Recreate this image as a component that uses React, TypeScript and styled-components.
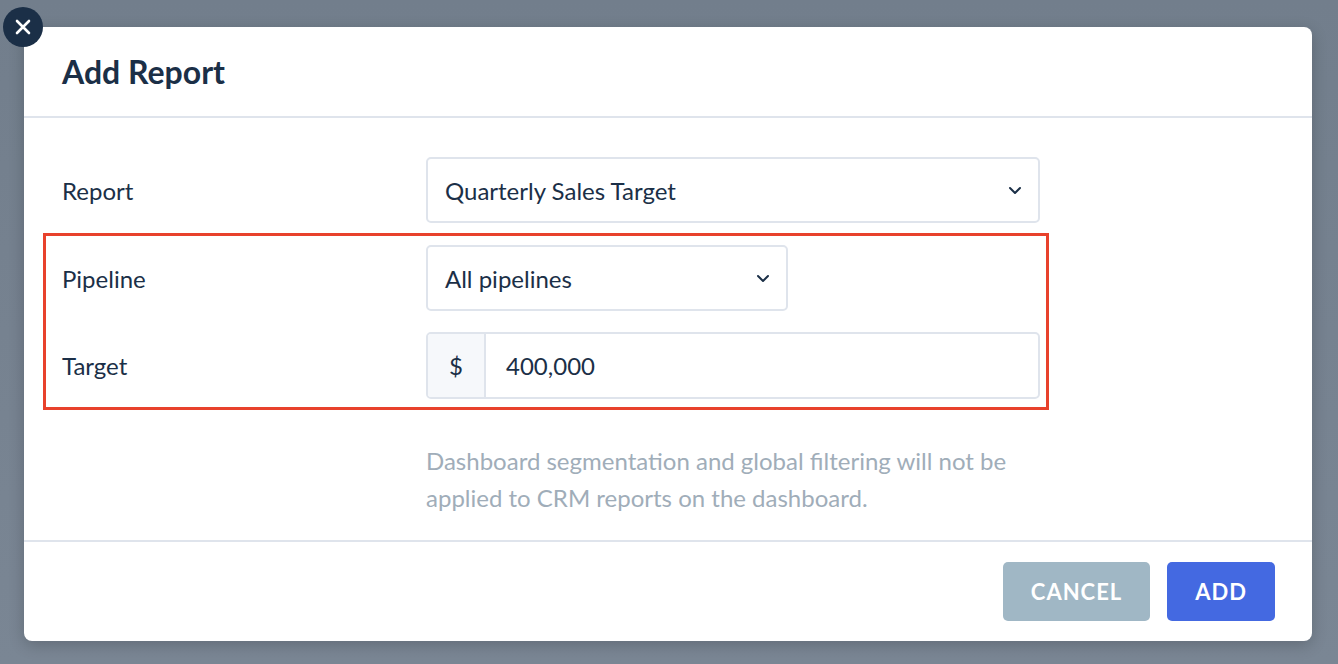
import styled, { createGlobalStyle } from 'styled-components';

const Global = createGlobalStyle`
  html, body { margin: 0; height: 100%; }
  body {
    background: #76828f;
    font-family: Lato, "Open Sans", sans-serif;
    color: #1b2f47;
  }
`;

const Backdrop = styled.div`
  position: relative;
  width: 1338px;
  height: 664px;
  padding: 27px 26px 23px 24px;
  box-sizing: border-box;
  background: linear-gradient(#727e8c, #7a8694);
`;

const CloseButton = styled.button`
  position: absolute;
  left: 3px;
  top: 7px;
  width: 40px;
  height: 40px;
  border-radius: 50%;
  border: none;
  background: #1b2f47;
  display: flex;
  align-items: center;
  justify-content: center;
  padding: 0;
  z-index: 2;
`;

const Modal = styled.div`
  background: #fff;
  border-radius: 8px;
  height: 100%;
  display: flex;
  flex-direction: column;
  box-shadow: 0 4px 16px rgba(0, 0, 0, 0.2);
`;

const Header = styled.div`
  height: 89px;
  border-bottom: 2px solid #dfe4ec;
  display: flex;
  align-items: center;
  padding-left: 38px;
`;

const Title = styled.h1`
  margin: 0;
  font-size: 32px;
  font-weight: 700;
  color: #1b2f47;
`;

const Body = styled.div`
  flex: 1;
  padding: 39px 38px 0;
  border-bottom: 2px solid #dfe4ec;
`;

const Row = styled.div<{ $gap?: number }>`
  display: grid;
  grid-template-columns: 364px 614px;
  align-items: center;
  margin-bottom: ${p => p.$gap ?? 0}px;
`;

const Label = styled.div`
  font-size: 24px;
`;

const Highlight = styled.div`
  width: 1006px;
  box-sizing: border-box;
  margin: 10px 0 0 -19px;
  padding: 9px 0 8px 16px;
  border: 3px solid #e8412c;
`;

const Select = styled.div<{ $width: number }>`
  width: ${p => p.$width}px;
  height: 66px;
  box-sizing: border-box;
  border: 2px solid #dfe4ec;
  border-radius: 5px;
  display: flex;
  align-items: center;
  justify-content: space-between;
  padding: 0 16px 0 17px;
  font-size: 24px;
`;

const InputGroup = styled.div`
  height: 67px;
  box-sizing: border-box;
  border: 2px solid #dfe4ec;
  border-radius: 5px;
  display: flex;
  font-size: 24px;
  overflow: hidden;
`;

const Prefix = styled.div`
  width: 56px;
  background: #f6f8fb;
  border-right: 2px solid #dfe4ec;
  display: flex;
  align-items: center;
  justify-content: center;
`;

const Value = styled.div`
  display: flex;
  align-items: center;
  padding-left: 20px;
`;

const Help = styled.p`
  margin: 32px 0 0 364px;
  font-size: 24px;
  line-height: 37px;
  color: #a0adb9;
  width: 660px;
`;

const Footer = styled.div`
  height: 99px;
  display: flex;
  align-items: center;
  justify-content: flex-end;
  gap: 17px;
  padding-right: 37px;
`;

const Button = styled.button<{ $primary?: boolean }>`
  height: 59px;
  padding: 0 28px;
  border: none;
  border-radius: 5px;
  background: ${p => (p.$primary ? '#4469e1' : '#a0b7c5')};
  color: #fff;
  font-family: inherit;
  font-size: 22px;
  font-weight: 700;
  letter-spacing: 1px;
`;

const Chevron = () => (
  <svg width="14" height="9" viewBox="0 0 14 9" fill="none">
    <path d="M2 2l5 5 5-5" stroke="#1b2f47" strokeWidth="2" strokeLinecap="round" strokeLinejoin="round" />
  </svg>
);

export default function App() {
  return (
    <Backdrop>
      <Global />
      <CloseButton>
        <svg width="16" height="16" viewBox="0 0 16 16">
          <path d="M2 2l12 12M14 2L2 14" stroke="#fff" strokeWidth="2.6" strokeLinecap="round" />
        </svg>
      </CloseButton>
      <Modal>
        <Header>
          <Title>Add Report</Title>
        </Header>
        <Body>
          <Row>
            <Label>Report</Label>
            <Select $width={614}>
              Quarterly Sales Target <Chevron />
            </Select>
          </Row>
          <Highlight>
            <Row $gap={21}>
              <Label>Pipeline</Label>
              <Select $width={362}>
                All pipelines <Chevron />
              </Select>
            </Row>
            <Row>
              <Label>Target</Label>
              <InputGroup>
                <Prefix>$</Prefix>
                <Value>400,000</Value>
              </InputGroup>
            </Row>
          </Highlight>
          <Help>
            Dashboard segmentation and global filtering will not be applied to CRM reports on the dashboard.
          </Help>
        </Body>
        <Footer>
          <Button>CANCEL</Button>
          <Button $primary>ADD</Button>
        </Footer>
      </Modal>
    </Backdrop>
  );
}
